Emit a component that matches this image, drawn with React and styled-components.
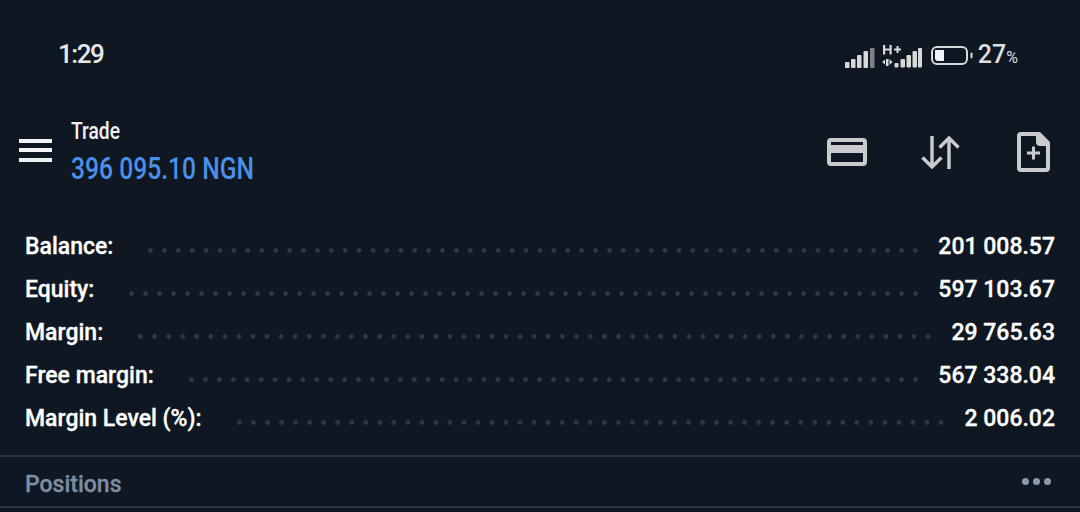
import React from 'react';
import styled, { createGlobalStyle } from 'styled-components';

const GlobalStyle = createGlobalStyle`
  html, body {
    margin: 0;
    padding: 0;
    background: #0f1822;
    font-family: Roboto, "Liberation Sans", sans-serif;
  }
`;

const Page = styled.div`
  width: 1080px;
  height: 512px;
  overflow: hidden;
  background: #0f1822;
  color: #fff;
`;

const StatusBar = styled.div`
  height: 108px;
  padding: 0 62px 0 58px;
  box-sizing: border-box;
  display: flex;
  justify-content: space-between;
  align-items: flex-start;
`;

const Clock = styled.div`
  margin-top: 39px;
  font-size: 26px;
  font-weight: 500;
  line-height: 30px;
  letter-spacing: -1.5px;
  color: #e6e7e9;
`;

const StatusIcons = styled.div`
  margin-top: 43px;
  height: 26px;
  display: flex;
  align-items: center;
  color: #d6d8da;
`;

const BatteryText = styled.div`
  margin-left: 5px;
  font-size: 25px;
  font-weight: 500;
  line-height: 28px;
  color: #dcdee0;
  small {
    font-size: 16px;
    font-weight: 400;
  }
`;

const Toolbar = styled.div`
  height: 88px;
  display: flex;
  align-items: center;
  padding: 0 30px 0 19px;
`;

const Burger = styled.div`
  width: 33px;
  height: 23px;
  margin-top: -4px;
  display: flex;
  flex-direction: column;
  justify-content: space-between;
  span {
    height: 4px;
    background: #f2f3f4;
  }
`;

const Title = styled.div`
  margin-left: 19px;
  flex: 1;
  display: flex;
  flex-direction: column;
`;

const TitleTop = styled.div`
  margin-top: -1px;
  font-size: 24px;
  font-weight: 500;
  line-height: 28px;
  color: #f0f1f2;
  transform: scaleX(0.8);
  transform-origin: left;
`;

const TitleAmount = styled.div`
  margin-top: 7px;
  font-size: 31px;
  font-weight: 500;
  line-height: 34px;
  color: #4a90e8;
  white-space: nowrap;
  transform: scaleX(0.795);
  transform-origin: left;
`;

const Actions = styled.div`
  display: flex;
  align-items: center;
  color: #c9cbcd;
`;

const Summary = styled.div`
  padding: 29px 25px 0 25px;
  display: flex;
  flex-direction: column;
`;

const Row = styled.div`
  height: 43px;
  display: flex;
  align-items: center;
`;

const Label = styled.div`
  font-size: 23px;
  font-weight: 500;
  color: #fff;
  white-space: nowrap;
  -webkit-text-stroke: 0.3px #fff;
`;

const Leader = styled.div`
  flex: 1;
  height: 5px;
  margin: 7px 11px 0 35px;
  background-image: radial-gradient(circle at 2.5px 2.5px, #2e3742 2px, transparent 2.6px);
  background-size: 14px 5px;
  background-repeat: round no-repeat;
`;

const Value = styled(Label)``;

const SectionHeader = styled.div`
  margin-top: 15px;
  height: 53px;
  box-sizing: border-box;
  border-top: 2px solid #2a3540;
  border-bottom: 2px solid #2a3540;
  padding: 0 29px 0 25px;
  display: flex;
  align-items: center;
  justify-content: space-between;
`;

const SectionTitle = styled.div`
  padding-top: 5px;
  font-size: 23px;
  font-weight: 500;
  color: #7d8da3;
  -webkit-text-stroke: 0.3px #7d8da3;
`;

const More = styled.div`
  display: flex;
  gap: 4px;
  span {
    width: 7px;
    height: 7px;
    border-radius: 50%;
    background: #8b99ad;
  }
`;

const rows = [
  ['Balance:', '201 008.57'],
  ['Equity:', '597 103.67'],
  ['Margin:', '29 765.63'],
  ['Free margin:', '567 338.04'],
  ['Margin Level (%):', '2 006.02'],
];

const SignalIcon = () => (
  <svg width="30" height="20" viewBox="0 0 30 20" fill="currentColor" style={{ marginTop: 3 }}>
    <rect x="0" y="14" width="4.500" height="6" rx="1" />
    <rect x="6" y="11" width="4.500" height="9" rx="1" />
    <rect x="12" y="7" width="4.500" height="13" rx="1" />
    <rect x="18.500" y="3" width="4.500" height="17" rx="1" />
    <rect x="25" y="0" width="4.500" height="20" rx="1" opacity="0.55" />
  </svg>
);

const SignalHIcon = () => (
  <svg width="40" height="24" viewBox="0 0 40 24" fill="currentColor" style={{ marginLeft: 7, marginTop: 1 }}>
    <path d="M1 0h2.200v3.500h4.300V0h2.200v9.500H7.500V5.500H3.200v4H1zM12 3.500h2.500V1h2.100v2.500H19v2h-2.400V8h-2.100V5.500H12z" />
    <path d="M0 17l3-2.500v5zM4 14h2.500v7H4zM7.500 14l3 3-3 3z" />
    <rect x="12.500" y="18" width="4" height="4.500" rx="1" />
    <rect x="18.500" y="14" width="4.500" height="8.500" rx="1" />
    <rect x="24.500" y="10" width="4.500" height="12.500" rx="1" />
    <rect x="30.500" y="6" width="4.500" height="16.500" rx="1" />
    <rect x="36" y="3" width="4" height="19.500" rx="1" />
  </svg>
);

const BatteryIcon = () => (
  <svg width="42" height="20" viewBox="0 0 42 20" fill="none" style={{ marginLeft: 9 }}>
    <rect x="1" y="1" width="35" height="17" rx="5" stroke="currentColor" strokeWidth="2" />
    <path d="M4 4h9v11H7a3 3 0 0 1-3-3z" fill="#f2f3f4" />
    <rect x="39.500" y="6.500" width="2" height="6" rx="1" fill="currentColor" />
  </svg>
);

const CardIcon = () => (
  <svg width="40" height="28" viewBox="0 0 40 28" fill="currentColor">
    <path fillRule="evenodd" d="M4 0h32a4 4 0 0 1 4 4v20a4 4 0 0 1-4 4H4a4 4 0 0 1-4-4V4a4 4 0 0 1 4-4zm0 4v3h32V4zm0 11v9h32v-9z" />
  </svg>
);

const SortIcon = () => (
  <svg width="39" height="33" viewBox="0 0 39 33" fill="none" stroke="currentColor" strokeWidth="3.400" style={{ marginLeft: 54 }}>
    <path d="M11 0v31M1.500 21.500L11 31l9.500-9.500" />
    <path d="M28 33V2M18.500 11.500L28 2l9.500 9.500" />
  </svg>
);

const NewDocIcon = () => (
  <svg width="33" height="40" viewBox="0 0 33 40" fill="currentColor" style={{ marginLeft: 57 }}>
    <path fillRule="evenodd" d="M4 0h19l10 10v26a4 4 0 0 1-4 4H4a4 4 0 0 1-4-4V4a4 4 0 0 1 4-4zm0 4v32h25V14h-6a4 4 0 0 1-4-4V4zM15 14.500h3v5h5v3h-5v5h-3v-5h-5v-3h5z" />
  </svg>
);

const App = () => (
  <Page>
    <GlobalStyle />
    <StatusBar>
      <Clock>1:29</Clock>
      <StatusIcons>
        <SignalIcon />
        <SignalHIcon />
        <BatteryIcon />
        <BatteryText>27<small>%</small></BatteryText>
      </StatusIcons>
    </StatusBar>
    <Toolbar>
      <Burger><span /><span /><span /></Burger>
      <Title>
        <TitleTop>Trade</TitleTop>
        <TitleAmount>396 095.10 NGN</TitleAmount>
      </Title>
      <Actions>
        <CardIcon />
        <SortIcon />
        <NewDocIcon />
      </Actions>
    </Toolbar>
    <Summary>
      {rows.map(([label, value]) => (
        <Row key={label}>
          <Label>{label}</Label>
          <Leader />
          <Value>{value}</Value>
        </Row>
      ))}
    </Summary>
    <SectionHeader>
      <SectionTitle>Positions</SectionTitle>
      <More><span /><span /><span /></More>
    </SectionHeader>
  </Page>
);

export default App;
